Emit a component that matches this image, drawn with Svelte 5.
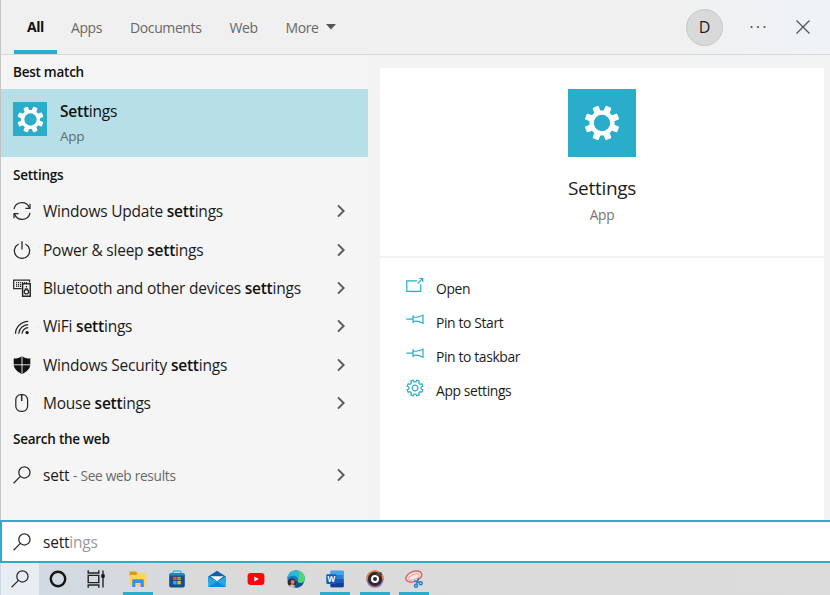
<script lang="ts">
  interface SettingLink {
    icon: string;
    before: string;
  }

  const tabs = ["All", "Apps", "Documents", "Web", "More"];

  const links: SettingLink[] = [
    { icon: "update", before: "Windows Update" },
    { icon: "power", before: "Power & sleep" },
    { icon: "devices", before: "Bluetooth and other devices" },
    { icon: "wifi", before: "WiFi" },
    { icon: "shield", before: "Windows Security" },
    { icon: "mouse", before: "Mouse" },
  ];

  const actions = [
    { icon: "open", label: "Open" },
    { icon: "pin", label: "Pin to Start" },
    { icon: "pin", label: "Pin to taskbar" },
    { icon: "gear", label: "App settings" },
  ];

  const apps = [
    { id: "explorer", running: true },
    { id: "store", running: false },
    { id: "mail", running: false },
    { id: "youtube", running: false },
    { id: "edge", running: false },
    { id: "word", running: true },
    { id: "music", running: true },
    { id: "snip", running: true },
  ];

  let activeTab = $state("All");

  // eight-toothed outline centred on 0,0
  function gearPath(inner: number, outer: number, root: number, tip: number) {
    const points: string[] = [];
    for (let i = 0; i < 8; i++) {
      const mid = 22.5 + i * 45;
      for (const [offset, radius] of [[-root, inner], [-tip, outer], [tip, outer], [root, inner]]) {
        const a = ((mid + offset) * Math.PI) / 180;
        points.push(`${(radius * Math.cos(a)).toFixed(2)} ${(radius * Math.sin(a)).toFixed(2)}`);
      }
    }
    return `M${points.join("L")}Z`;
  }

  const solidGear = gearPath(11.8, 16.6, 11, 7.5);
  const thinGear = gearPath(6.2, 8.1, 13, 9.5);
</script>

{#snippet gearTile()}
  <svg class="gear" viewBox="-34 -34 68 68">
    <path d={solidGear} fill="#fff" stroke="#fff" stroke-width="2" stroke-linejoin="round" />
    <circle r="8.2" fill="#29adcb" />
  </svg>
{/snippet}

{#snippet magnifier()}
  <svg class="glyph" viewBox="0 0 18 18">
    <circle cx="11.4" cy="6.4" r="5.6" />
    <path d="M7.4 10.4L.6 17.3" />
  </svg>
{/snippet}

{#snippet chevron()}
  <svg class="chevron" viewBox="0 0 8 14"><path d="M1 1.4L6.6 7L1 12.6" /></svg>
{/snippet}

<div class="search">
  <header class="tabs">
    {#each tabs as tab}
      <button class="tab" class:active={tab === activeTab} onclick={() => (activeTab = tab)}>
        {tab}
        {#if tab === "More"}
          <svg class="caret" viewBox="0 0 10 6"><path d="M0 0h10L5 5.6z" /></svg>
        {/if}
      </button>
    {/each}
    <span class="avatar">D</span>
    <svg class="dots" viewBox="0 0 16 4">
      <circle cx="1.5" cy="2" r="1.1" /><circle cx="8" cy="2" r="1.1" /><circle cx="14.5" cy="2" r="1.1" />
    </svg>
    <svg class="close" viewBox="0 0 14 14"><path d="M.5 .5l13 13M13.5 .5l-13 13" /></svg>
  </header>

  <main class="content">
    <section class="results">
      <h2>Best match</h2>
      <div class="best">
        <div class="tile">{@render gearTile()}</div>
        <div>
          <div class="best-name"><b>Sett</b>ings</div>
          <div class="best-kind">App</div>
        </div>
      </div>
      <h2 class="group">Settings</h2>
      {#each links as link}
        <div class="row">
          <svg class="glyph" viewBox="0 0 18 18">
            {#if link.icon === "update"}
              <path d="M1 7.2A8 8 0 0 1 16.4 6M17 10.8A8 8 0 0 1 1.6 12" />
              <path d="M17 1.8V6.4H12.4M1 16.2V11.6H5.6" />
            {:else if link.icon === "power"}
              <path d="M5.6 3A7.6 7.6 0 1 0 12.4 3M9 .2V8.4" />
            {:else if link.icon === "devices"}
              <path d="M8.6 9.6H.7V1.2H16.6V3.6" />
              <path d="M3 3.6H15M3 5.6H8.6M3 7.4H8.6" stroke-dasharray="1.2 .8" />
              <path d="M9.6 4.7H17.2V17.3H9.6Z" stroke-width="1.5" />
              <circle cx="13.4" cy="12.7" r="2.2" />
              <circle cx="13.4" cy="7.8" r=".8" class="solid" />
              <path d="M11.6 10h3.6" />
            {:else if link.icon === "wifi"}
              <path d="M2.4 16.7A13 13 0 0 1 15.2 4.4M5.7 16.7A9.7 9.7 0 0 1 15.2 7.6M9 16.7A6.4 6.4 0 0 1 15.2 10.7" />
              <circle cx="14.1" cy="15.6" r="1.6" class="solid" />
            {:else if link.icon === "shield"}
              <path class="solid" d="M9 .2C11 1.9 14 2.6 17.3 2.6V8.3C17.3 13 13.5 16 9 18C4.5 16 .7 13 .7 8.3V2.6C4 2.6 7 1.9 9 .2Z" />
              <path class="cross" d="M9 .5V17.6M.7 8.8H17.3" />
            {:else}
              <rect x="2.8" y=".7" width="11.8" height="16.6" rx="5" />
              <path d="M8.7 1V7" stroke-width="1.5" />
            {/if}
          </svg>
          <span class="row-text">{link.before} <b>sett</b><span class="rest">ings</span></span>
          {@render chevron()}
        </div>
      {/each}
      <h2 class="web">Search the web</h2>
      <div class="row">
        {@render magnifier()}
        <span class="row-text">sett <small>- See web results</small></span>
        {@render chevron()}
      </div>
    </section>

    <section class="preview">
      <div class="hero">
        <div class="tile big">{@render gearTile()}</div>
        <div class="hero-name">Settings</div>
        <div class="hero-kind">App</div>
      </div>
      <ul class="actions">
        {#each actions as action}
          <li>
            <svg class="action-icon" viewBox="0 0 18 18">
              {#if action.icon === "open"}
                <path d="M11 3.8H.8V14.3H14.7V7.2" />
                <path d="M11.7 6.5L16.5 1.7M13.2 1.5H16.7V5" />
              {:else if action.icon === "pin"}
                <path d="M.3 8.2H7M7 4.2V12.2M7 5.7C9 6.6 13 6.2 17 4.2V12.2C13 10.2 9 9.8 7 10.7" />
              {:else}
                <g transform="translate(9 9)">
                  <path d={thinGear} stroke-linejoin="round" />
                  <circle r="2.8" />
                </g>
              {/if}
            </svg>
            {action.label}
          </li>
        {/each}
      </ul>
    </section>
  </main>

  <div class="box">
    {@render magnifier()}
    <span>sett<span class="hint">ings</span></span>
  </div>

  <nav class="taskbar">
    <div class="system current">{@render magnifier()}</div>
    <div class="system">
      <svg class="task-icon" viewBox="0 0 18 18"><circle cx="9" cy="9" r="7.2" fill="none" stroke="#151515" stroke-width="2.4" /></svg>
    </div>
    <div class="system">
      <svg class="task-icon" viewBox="0 0 18 18">
        <g fill="none" stroke="#222" stroke-width="1.4">
          <path d="M1.2 .3V3H11.8V.3M1.2 17.7V15H11.8V17.7M1.2 5.4H11.8V12.6H1.2ZM16 .5V17.5" />
        </g>
        <rect x="14.3" y="4.3" width="3.4" height="3.4" fill="#111" />
      </svg>
    </div>
    {#each apps as app}
      <div class="app" class:running={app.running}>
        <svg class="task-icon" viewBox="0 0 18 18">
          {#if app.id === "explorer"}
            <path d="M.5 1.5H7L8.5 3.5V6H.5Z" fill="#d99a16" />
            <path d="M.5 5H7.5L9 3.2H17.5V16H.5Z" fill="#ffd45c" />
            <path d="M3.2 17V10.5Q3.2 9.3 4.5 9.3H13.5Q14.8 9.3 14.8 10.5V17H11.6V13H6.4V17Z" fill="#3b91de" />
          {:else if app.id === "store"}
            <path d="M5 4V2.5Q5 1 6.5 1H11.5Q13 1 13 2.5V4" fill="none" stroke="#36bdf0" stroke-width="1.5" />
            <rect x="1.2" y="3.3" width="15.6" height="14.3" rx="1.8" fill="#164f88" />
            <path d="M1.2 5.5Q1.2 3.3 3 3.3H15Q16.8 3.3 16.8 5.5Z" fill="#2487c8" />
            <path d="M5.2 6.8H8.6V10.200H5.2Z" fill="#f35325" />
            <path d="M9.4 6.8H12.8V10.200H9.4Z" fill="#81bc06" />
            <path d="M5.2 11H8.6V14.400H5.2Z" fill="#19b4f0" />
            <path d="M9.4 11H12.8V14.400H9.4Z" fill="#ffba08" />
          {:else if app.id === "mail"}
            <path d="M.2 6.5L9 .8L17.8 6.5V12H.2Z" fill="#1261ad" />
            <path d="M.2 6.5L9 11.5L17.8 6.5V17H.2Z" fill="#21a9e8" />
            <path d="M.2 17L9 11.5L17.8 17Z" fill="#1488d2" />
            <path d="M2.3 6.2H15.7L9 11.3Z" fill="#f6fbff" />
          {:else if app.id === "youtube"}
            <rect x=".6" y="3" width="16.8" height="12" rx="3" fill="#f80808" />
            <path d="M7.3 6.4L11.8 9L7.3 11.6Z" fill="#fff" />
          {:else if app.id === "edge"}
            <circle cx="9" cy="9" r="8.7" fill="#147bc5" />
            <path d="M.5 8C1 3 4.5 .3 9 .3C14 .3 17.7 4 17.7 8.5C17.7 11.5 15.5 13 12.5 12.8C10.5 12.7 10.2 11.8 11 10.7C12.5 7 6 3 .5 8Z" fill="#2cb9d8" />
            <path d="M11 .6C15 1.2 17.7 4.5 17.7 8.5C17.7 11.5 15.5 13 12.5 12.8C10.5 12.7 10.2 11.8 11 10.7C12 8 13 4 11 .6Z" fill="#55d36d" />
            <path d="M10.5 10C10 12 12 14.2 16.6 12.9C15 16 12 17.7 9 17.7C7 15 8 11 10.5 10Z" fill="#124e92" />
            <circle cx="4.8" cy="12.6" r="4.2" fill="#3d2824" />
            <circle cx="5.6" cy="12" r="2" fill="#c98c79" />
            <path d="M2 16Q5 12.5 8.4 16Q5.5 18.3 2 16Z" fill="#d8b6bd" />
          {:else if app.id === "word"}
            <rect x="4.5" y=".8" width="13.2" height="16.4" rx="1" fill="#2b7cd3" />
            <path d="M4.5 1.8Q4.5 .8 5.5 .8H16.7Q17.7 .8 17.7 1.8V4.9H4.5Z" fill="#41a5ee" />
            <path d="M4.5 9H17.7V13H4.5Z" fill="#185abd" />
            <path d="M4.5 13H17.7V16.2Q17.7 17.2 16.7 17.2H5.5Q4.5 17.2 4.5 16.2Z" fill="#103f91" />
            <rect x=".3" y="4.3" width="10" height="9.6" rx=".8" fill="#185abd" />
            <text x="5.3" y="12" text-anchor="middle" class="w">W</text>
          {:else if app.id === "music"}
            <circle cx="9" cy="9" r="8.7" fill="#9a6aa2" />
            <path d="M.3 9A8.7 8.7 0 0 1 17.7 9Z" fill="#ef8543" />
            <circle cx="9" cy="9" r="7.2" fill="#2e292f" />
            <circle cx="9" cy="9" r="3" fill="none" stroke="#fff" stroke-width="2" />
            <path d="M9.5 4L15 2L16.5 5L11 6Z" fill="#51464a" />
          {:else}
            <g transform="rotate(-22 9 7)" fill="none" stroke="#df665e">
              <ellipse cx="9" cy="6.5" rx="8.3" ry="5" fill="#f5e9e8" stroke-width="1.5" />
              <ellipse cx="9" cy="7" rx="5.5" ry="2.5" stroke="#eaa19a" />
            </g>
            <g fill="none" stroke="#2682cc" stroke-width="1.5">
              <path d="M13.5 8L11.500 14M9 11L15 12.500" />
              <circle cx="11" cy="15.7" r="1.5" /><circle cx="15.700" cy="13.200" r="1.5" />
            </g>
          {/if}
        </svg>
      </div>
    {/each}
  </nav>
</div>

<style>
  :global(body) {
    margin: 0;
    overflow: hidden;
  }
  .search {
    width: 830px;
    height: 595px;
    box-sizing: border-box;
    display: flex;
    flex-direction: column;
    background: #f3f3f3;
    color: #1c1c1c;
    font-family: "Open Sans", "Noto Sans", sans-serif;
    font-size: 15.5px;
    letter-spacing: -0.22px;
  }
  svg {
    display: block;
    flex: none;
    fill: none;
  }
  .tabs {
    height: 54px;
    flex: none;
    display: flex;
    align-items: center;
    padding: 0 20px 0 13px;
    border-bottom: 1px solid #d5d7d8;
    border-left: 1px solid #c4c4c4;
    background: linear-gradient(90deg, #f0f0f0 80%, #eff3f7);
  }
  .tab {
    height: 54px;
    padding: 0;
    margin-right: 28px;
    border: 0;
    background: none;
    font: inherit;
    font-size: 14px;
    letter-spacing: -0.4px;
    color: #686868;
    display: flex;
    align-items: center;
    gap: 7px;
  }
  .tab.active {
    width: 43px;
    margin-right: 14px;
    padding-top: 3px;
    box-sizing: border-box;
    justify-content: center;
    border-bottom: 4px solid #29adcb;
    color: #111;
    font-weight: 700;
  }
  .caret {
    width: 10px;
    height: 6px;
    fill: #555;
  }
  .avatar {
    width: 35px;
    height: 35px;
    margin-left: auto;
    border: 1px solid #c8c8c8;
    border-radius: 50%;
    background: #d9d9d9;
    display: flex;
    align-items: center;
    justify-content: center;
    font-size: 16px;
  }
  .dots {
    width: 16px;
    height: 4px;
    margin: 0 30px 0 27px;
    fill: #555;
  }
  .close {
    width: 14px;
    height: 14px;
    stroke: #555;
    stroke-width: 1.3;
  }
  .content {
    flex: 1;
    min-height: 0;
    display: flex;
    border-left: 1px solid #c4c4c4;
  }
  .results {
    width: 367px;
    background: #f5f5f5;
    margin-right: 12px;
  }
  h2 {
    margin: 0;
    padding-left: 12px;
    height: 34px;
    line-height: 35px;
    font-size: 13.5px;
    letter-spacing: -0.25px;
    font-weight: 600;
    color: #111;
  }
  .group {
    height: 35px;
    line-height: 36px;
  }
  .best {
    height: 68px;
    box-sizing: border-box;
    padding: 13px 12px;
    display: flex;
    gap: 13px;
    background: #b7dfe7;
    color: #111;
  }
  .tile {
    width: 34px;
    height: 34px;
    flex: none;
    display: flex;
    align-items: center;
    justify-content: center;
    background: #29adcb;
  }
  .tile .gear {
    width: 51px;
    height: 51px;
    margin: -9px;
  }
  .best-name {
    line-height: 20px;
    margin-top: -1px;
  }
  b {
    font-weight: 600;
    color: #111;
  }
  .best-kind {
    margin-top: 6px;
    line-height: 18px;
    font-size: 13.5px;
    color: #5c6d70;
  }
  .row {
    height: 38.35px;
    display: flex;
    align-items: center;
    padding: 0 23px 0 12px;
  }
  .glyph {
    width: 18px;
    height: 18px;
    stroke: #292929;
    stroke-width: 1.25;
  }
  .glyph .solid {
    fill: #111;
    stroke: none;
  }
  .glyph .cross {
    stroke: #f5f5f5;
    stroke-width: 0.9;
  }
  .row-text {
    flex: 1;
    margin-left: 12px;
    white-space: nowrap;
  }
  .rest {
    font-weight: 500;
  }
  small {
    font-size: 13.7px;
    letter-spacing: -0.3px;
    color: #696969;
  }
  .chevron {
    width: 8px;
    height: 14px;
    stroke: #5c5c5c;
    stroke-width: 2;
  }
  .preview {
    width: 444px;
    margin-top: 13px;
    background: #fff;
  }
  .hero {
    height: 190px;
    box-sizing: border-box;
    padding-top: 21px;
    border-bottom: 2px solid #f1f1f1;
    display: flex;
    flex-direction: column;
    align-items: center;
  }
  .tile.big {
    width: 68px;
    height: 68px;
  }
  .big .gear {
    width: 68px;
    height: 68px;
    margin: 0;
  }
  .hero-name {
    margin-top: 18px;
    line-height: 26px;
    font-size: 19px;
    letter-spacing: -0.3px;
  }
  .hero-kind {
    margin-top: 4px;
    line-height: 20px;
    font-size: 13.7px;
    color: #737373;
  }
  .actions {
    list-style: none;
    margin: 0;
    padding: 13px 0 0 26px;
    font-size: 13.9px;
    letter-spacing: -0.38px;
  }
  li {
    height: 34.2px;
    display: flex;
    align-items: center;
    gap: 12px;
  }
  .action-icon {
    width: 18px;
    height: 18px;
    margin-bottom: 5px;
    stroke: #29adcb;
    stroke-width: 1.2;
  }
  .box {
    height: 43px;
    box-sizing: border-box;
    flex: none;
    padding-left: 11px;
    display: flex;
    align-items: center;
    gap: 12px;
    border: 2px solid #29adcb;
    border-right: 0;
    background: #fff;
  }
  .hint {
    color: #999;
  }
  .taskbar {
    height: 32px;
    flex: none;
    display: flex;
    padding-left: 1px;
    background: linear-gradient(90deg, #cfd9e5, #dadada 25%, #dcdcdc);
  }
  .system {
    width: 38px;
    display: flex;
    align-items: center;
    justify-content: center;
  }
  .system:nth-child(3) {
    margin-right: 3px;
  }
  .current {
    background: #e7edf2;
  }
  .app {
    width: 30px;
    margin: 0 4.75px;
    box-sizing: border-box;
    border-bottom: 3px solid transparent;
    padding-top: 3px;
    display: flex;
    align-items: center;
    justify-content: center;
  }
  .running {
    border-color: #29adcb;
  }
  .task-icon {
    width: 18px;
    height: 18px;
  }
  .w {
    font-size: 8px;
    font-weight: 700;
    letter-spacing: 0;
    fill: #fff;
  }
</style>
